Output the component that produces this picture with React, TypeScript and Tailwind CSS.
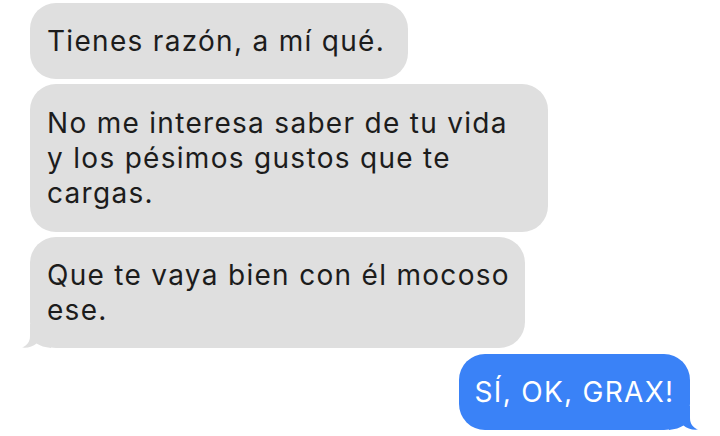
import React from "react";

function TailLeft() {
  return (
    <svg
      className="absolute -left-[9px] bottom-0"
      width="30"
      height="24"
      viewBox="0 0 30 24"
    >
      <path
        d="M9 0 L9 12 C9 18 6 21.5 1 23.6 C7 24.2 12 22.5 15.5 19.5 C19 21.8 24 23.4 30 24 L30 0 Z"
        fill="#dfdfdf"
      />
    </svg>
  );
}

function TailRight() {
  return (
    <svg
      className="absolute -right-[9px] bottom-0"
      width="30"
      height="24"
      viewBox="0 0 30 24"
    >
      <path
        d="M21 0 L21 12 C21 18 24 21.5 29 23.6 C23 24.2 18 22.5 14.5 19.5 C11 21.8 6 23.4 0 24 L0 0 Z"
        fill="#3a82f7"
      />
    </svg>
  );
}

export default function App() {
  return (
    <div
      className="w-[720px] h-[436px] bg-white overflow-hidden flex flex-col gap-[5px] pt-[3px] pl-[30px] text-[28px] leading-[35px] tracking-[1.3px] text-[#1c1c1c]"
      style={{ fontFamily: "Inter, 'Noto Sans', sans-serif" }}
    >
      <div className="w-[378px] h-[76px] rounded-[26px] bg-[#dfdfdf] px-[17px] flex flex-col justify-center">
        <span className="whitespace-nowrap">Tienes razón, a mí qué.</span>
      </div>

      <div className="w-[518px] h-[148px] rounded-[26px] bg-[#dfdfdf] px-[17px] flex flex-col justify-center">
        <span className="whitespace-nowrap">No me interesa saber de tu vida</span>
        <span className="whitespace-nowrap">y los pésimos gustos que te</span>
        <span className="whitespace-nowrap">cargas.</span>
      </div>

      <div className="relative w-[495px] h-[111px] rounded-[26px] bg-[#dfdfdf] px-[17px] flex flex-col justify-center">
        <TailLeft />
        <span className="relative whitespace-nowrap">Que te vaya bien con él mocoso</span>
        <span className="relative whitespace-nowrap">ese.</span>
      </div>

      <div className="relative self-end mr-[30px] mt-[1px] w-[231px] h-[76px] rounded-[26px] bg-[#3a82f7] text-white flex items-center justify-center">
        <TailRight />
        <span className="relative whitespace-nowrap">SÍ, OK, GRAX!</span>
      </div>
    </div>
  );
}
